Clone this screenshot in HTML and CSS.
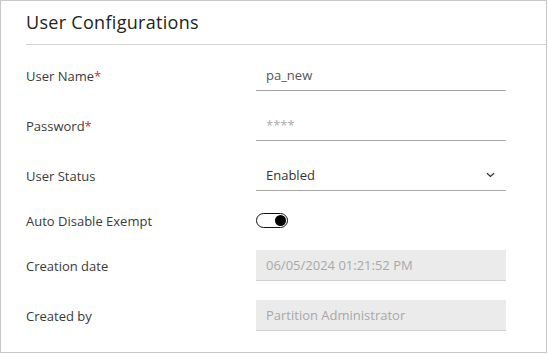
FILE: index.html
```html
<!DOCTYPE html>
<html>
<head>
<meta charset="utf-8">
<link rel="stylesheet" href="styles.css">
</head>
<body>
<div class="panel">
  <div class="header"><h1 class="title">User Configurations</h1></div>
  <div class="form">
    <div class="row">
      <div class="label">User Name<span class="req">*</span></div>
      <div class="field text">pa_new</div>
    </div>
    <div class="row">
      <div class="label">Password<span class="req">*</span></div>
      <div class="field text placeholder">****</div>
    </div>
    <div class="row">
      <div class="label">User Status</div>
      <div class="field text select">
        <span class="value">Enabled</span>
        <svg class="chev" width="9" height="6" viewBox="0 0 9 6"><path d="M1 1.2 L4.5 4.4 L8 1.2" fill="none" stroke="#333" stroke-width="1.3"/></svg>
      </div>
    </div>
    <div class="row short">
      <div class="label">Auto Disable Exempt</div>
      <div class="toggle"><span class="knob"></span></div>
    </div>
    <div class="row">
      <div class="label">Creation date</div>
      <div class="field disabled">06/05/2024 01:21:52 PM</div>
    </div>
    <div class="row">
      <div class="label">Created by</div>
      <div class="field disabled">Partition Administrator</div>
    </div>
  </div>
</div>
</body>
</html>
```
FILE: styles.css
```css
html, body {
  margin: 0;
  padding: 0;
  background: #fff;
}
body {
  font-family: "Open Sans", "Noto Sans", sans-serif;
  color: #333;
}
.panel {
  box-sizing: border-box;
  width: 547px;
  height: 353px;
  border: 1px solid #c8c8c8;
}
.header {
  margin-left: 25px;
  padding: 9px 0 10px 0;
  border-bottom: 1px solid #d4d4d4;
}
.title {
  margin: 0;
  font-size: 18px;
  font-weight: 400;
  line-height: 24px;
  letter-spacing: 0.3px;
  color: #222;
}
.form {
  padding: 15px 0 0 25px;
  display: flex;
  flex-direction: column;
  gap: 19px;
}
.row {
  display: flex;
  align-items: center;
  height: 31px;
}
.row.short {
  height: 21px;
}
.label {
  width: 230px;
  font-size: 13px;
  color: #3a3a3a;
}
.req {
  color: #e0262e;
}
.field {
  box-sizing: border-box;
  width: 250px;
  height: 31px;
  padding: 0 10px;
  display: flex;
  align-items: center;
  font-size: 13px;
  border-bottom: 1px solid #a6a6a6;
}
.text {
  color: #555;
}
.placeholder {
  color: #aaa;
}
.select {
  justify-content: space-between;
  color: #333;
}
.chev {
  margin-right: 1px;
}
.disabled {
  background: #ebebeb;
  color: #a8a8a8;
  border-bottom: 1px solid #cfcfcf;
}
.toggle {
  box-sizing: border-box;
  width: 32px;
  height: 15px;
  border: 1px solid #111;
  border-radius: 8px;
  display: flex;
  align-items: center;
  justify-content: flex-end;
  padding-right: 1px;
}
.knob {
  width: 11px;
  height: 11px;
  border-radius: 50%;
  background: #000;
}
```
